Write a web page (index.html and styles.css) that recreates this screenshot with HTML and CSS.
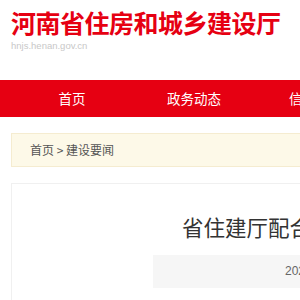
FILE: index.html
```html
<!DOCTYPE html>
<html lang="zh-CN">
<head>
    <meta charset="UTF-8">
    <meta name="viewport" content="width=device-width, initial-scale=1.0">
    <title>河南省住房和城乡建设厅</title>
    <link rel="stylesheet" href="styles.css">
</head>
<body>
    <header class="top">
        <div class="wrap">
            <h1 class="site-name">河南省住房和城乡建设厅</h1>
            <p class="site-url">hnjs.henan.gov.cn</p>
        </div>
    </header>
    <nav class="nav">
        <ul class="wrap nav-list">
            <li><a href="#">首页</a></li>
            <li><a href="#">政务动态</a></li>
            <li><a href="#">信息公开</a></li>
            <li><a href="#">政务服务</a></li>
            <li><a href="#">互动交流</a></li>
        </ul>
    </nav>
    <div class="wrap">
        <div class="crumb">首页 &gt; 建设要闻</div>
        <div class="article">
            <h2 class="article-title">省住建厅配合住房城乡建设部开展调研</h2>
            <div class="article-info">2023-09-15　来源：河南省住房和城乡建设厅</div>
        </div>
    </div>
</body>
</html>
```

FILE: styles.css
```css
body {
    margin: 0;
    padding: 0;
    background-color: #fff;
    font-family: "Liberation Sans", "Noto Sans CJK SC", sans-serif;
    overflow: hidden;
}
.wrap {
    width: 1200px;
    margin-left: 11px;
}
.top {
    height: 80px;
    padding-top: 8px;
    box-sizing: border-box;
}
.site-name {
    margin: 0;
    font-family: "Noto Sans CJK SC", sans-serif;
    font-size: 25px;
    line-height: 28px;
    font-weight: bold;
    letter-spacing: -0.5px;
    color: #e60012;
}
.site-url {
    margin: 4px 0 0;
    font-size: 9.5px;
    line-height: 12px;
    color: #c8c8c8;
}
.nav {
    background-color: #e60012;
    height: 37px;
}
.nav-list {
    display: flex;
    margin-top: 0;
    margin-bottom: 0;
    padding: 0;
    list-style: none;
}
.nav-list li {
    width: 122px;
    flex-shrink: 0;
    text-align: center;
}
.nav-list a {
    display: block;
    line-height: 37px;
    font-family: "Noto Sans CJK SC", sans-serif;
    font-size: 13.5px;
    color: #fff;
    text-decoration: none;
}
.crumb {
    margin-top: 16px;
    height: 34px;
    padding-left: 18px;
    line-height: 32px;
    box-sizing: border-box;
    background-color: #fdf9e8;
    border: 1px solid #f5ecd0;
    font-family: "Noto Sans CJK SC", sans-serif;
    font-size: 12px;
    color: #555;
}
.article {
    margin-top: 16px;
    height: 300px;
    padding-top: 28px;
    border: 1px solid #f0f0f0;
}
.article-title {
    margin: 0;
    padding-left: 170px;
    font-family: "Noto Sans CJK SC", sans-serif;
    font-size: 21.5px;
    line-height: 30px;
    font-weight: normal;
    color: #333;
    white-space: nowrap;
}
.article-info {
    margin: 13px 0 0 141px;
    height: 33px;
    padding-left: 132px;
    line-height: 33px;
    background-color: #f6f6f6;
    font-size: 12px;
    color: #666;
    white-space: nowrap;
}
```
